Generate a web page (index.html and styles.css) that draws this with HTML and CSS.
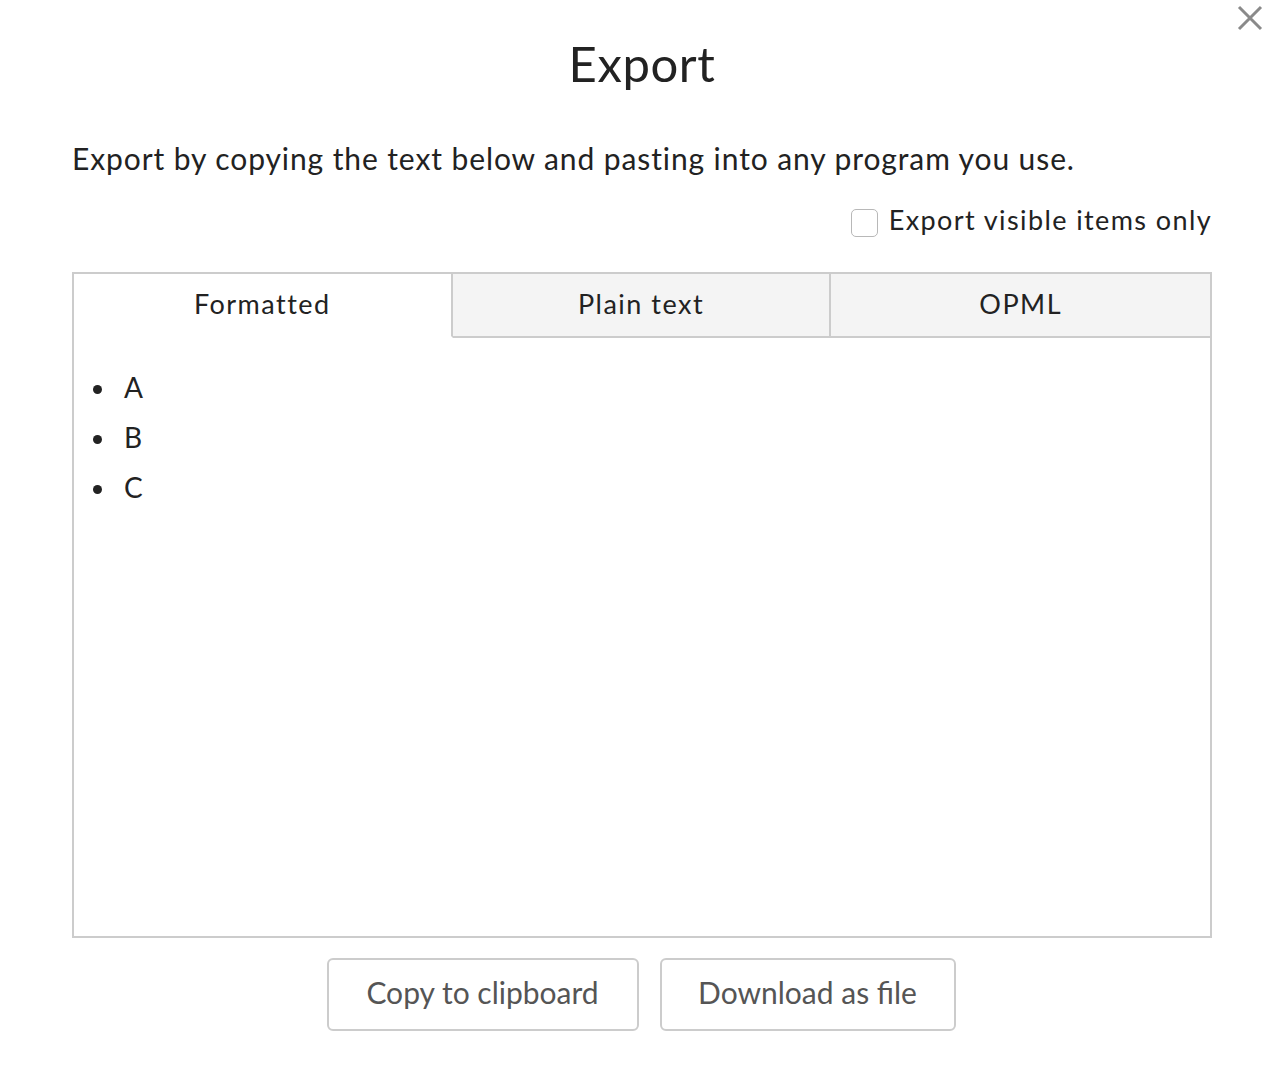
FILE: index.html
```html
<!DOCTYPE html>
<html>
<head>
<meta charset="utf-8">
<link rel="stylesheet" href="styles.css">
</head>
<body>
<div class="dialog">
  <button class="close" aria-label="Close">
    <svg width="26" height="26" viewBox="0 0 26 26"><path d="M2 2 L24 24 M24 2 L2 24" stroke="#8a8a8a" stroke-width="3" fill="none"/></svg>
  </button>
  <h1 class="title">Export</h1>
  <p class="desc">Export by copying the text below and pasting into any program you use.</p>
  <div class="option-row">
    <label class="option"><span class="checkbox"></span><span>Export visible items only</span></label>
  </div>
  <div class="panel">
    <div class="tabs">
      <div class="tab active">Formatted</div>
      <div class="tab">Plain text</div>
      <div class="tab last">OPML</div>
    </div>
    <ul class="list">
      <li>A</li>
      <li>B</li>
      <li>C</li>
    </ul>
  </div>
  <div class="actions">
    <button class="btn btn-copy">Copy to clipboard</button>
    <button class="btn btn-dl">Download as file</button>
  </div>
</div>
</body>
</html>
```
FILE: styles.css
```css
html, body {
  margin: 0;
  padding: 0;
  background: #fff;
}
body {
  font-family: Lato, "Open Sans", "Liberation Sans", sans-serif;
  color: #222;
}
.dialog {
  position: relative;
  padding: 30px 72px 0 72px;
}
.close {
  position: absolute;
  top: 5px;
  right: 21px;
  border: 0;
  background: none;
  padding: 0;
  cursor: pointer;
}
.title {
  margin: 0;
  text-align: center;
  font-weight: 400;
  font-size: 49px;
  letter-spacing: 0.6px;
  line-height: 66px;
  color: #222;
}
.desc {
  margin: 45px 0 0 0;
  font-size: 30px;
  letter-spacing: 0.9px;
  line-height: 34px;
  color: #222;
  white-space: nowrap;
}
.option-row {
  display: flex;
  justify-content: flex-end;
  margin-top: 28px;
}
.option {
  display: flex;
  align-items: center;
  gap: 11px;
  font-size: 27px;
  letter-spacing: 1.4px;
  line-height: 34px;
  color: #222;
}
.checkbox {
  width: 25px;
  height: 26px;
  border: 1px solid #b8b8b8;
  border-radius: 5px;
  background: #fff;
  margin-top: 6px;
}
.panel {
  margin-top: 35px;
  border: 2px solid #cccccc;
  box-sizing: border-box;
  height: 666px;
}
.tabs {
  display: grid;
  grid-template-columns: 1fr 1fr 1fr;
}
.tab {
  height: 64px;
  box-sizing: border-box;
  padding-bottom: 4px;
  display: flex;
  align-items: center;
  justify-content: center;
  font-size: 27px;
  letter-spacing: 1.5px;
  color: #222;
  background: #f4f4f4;
  border-right: 2px solid #cccccc;
  border-bottom: 2px solid #cccccc;
}
.tab.active {
  background: #fff;
  border-bottom-color: transparent;
}
.tab.last {
  border-right: 0;
}
.list {
  margin: 0;
  padding: 24px 0 0 44px;
  font-size: 28px;
  line-height: 50px;
  color: #222;
}
.list li {
  padding-left: 6px;
}
.actions {
  display: flex;
  justify-content: center;
  gap: 21px;
  margin-top: 20px;
  padding-right: 2px;
}
.btn {
  font-family: inherit;
  font-size: 30px;
  color: #555;
  background: #fff;
  border: 2px solid #cccccc;
  border-radius: 6px;
  height: 73px;
  padding: 0 0 5px 0;
  cursor: pointer;
}
.btn-copy { width: 312px; }
.btn-dl { width: 296px; }
```
